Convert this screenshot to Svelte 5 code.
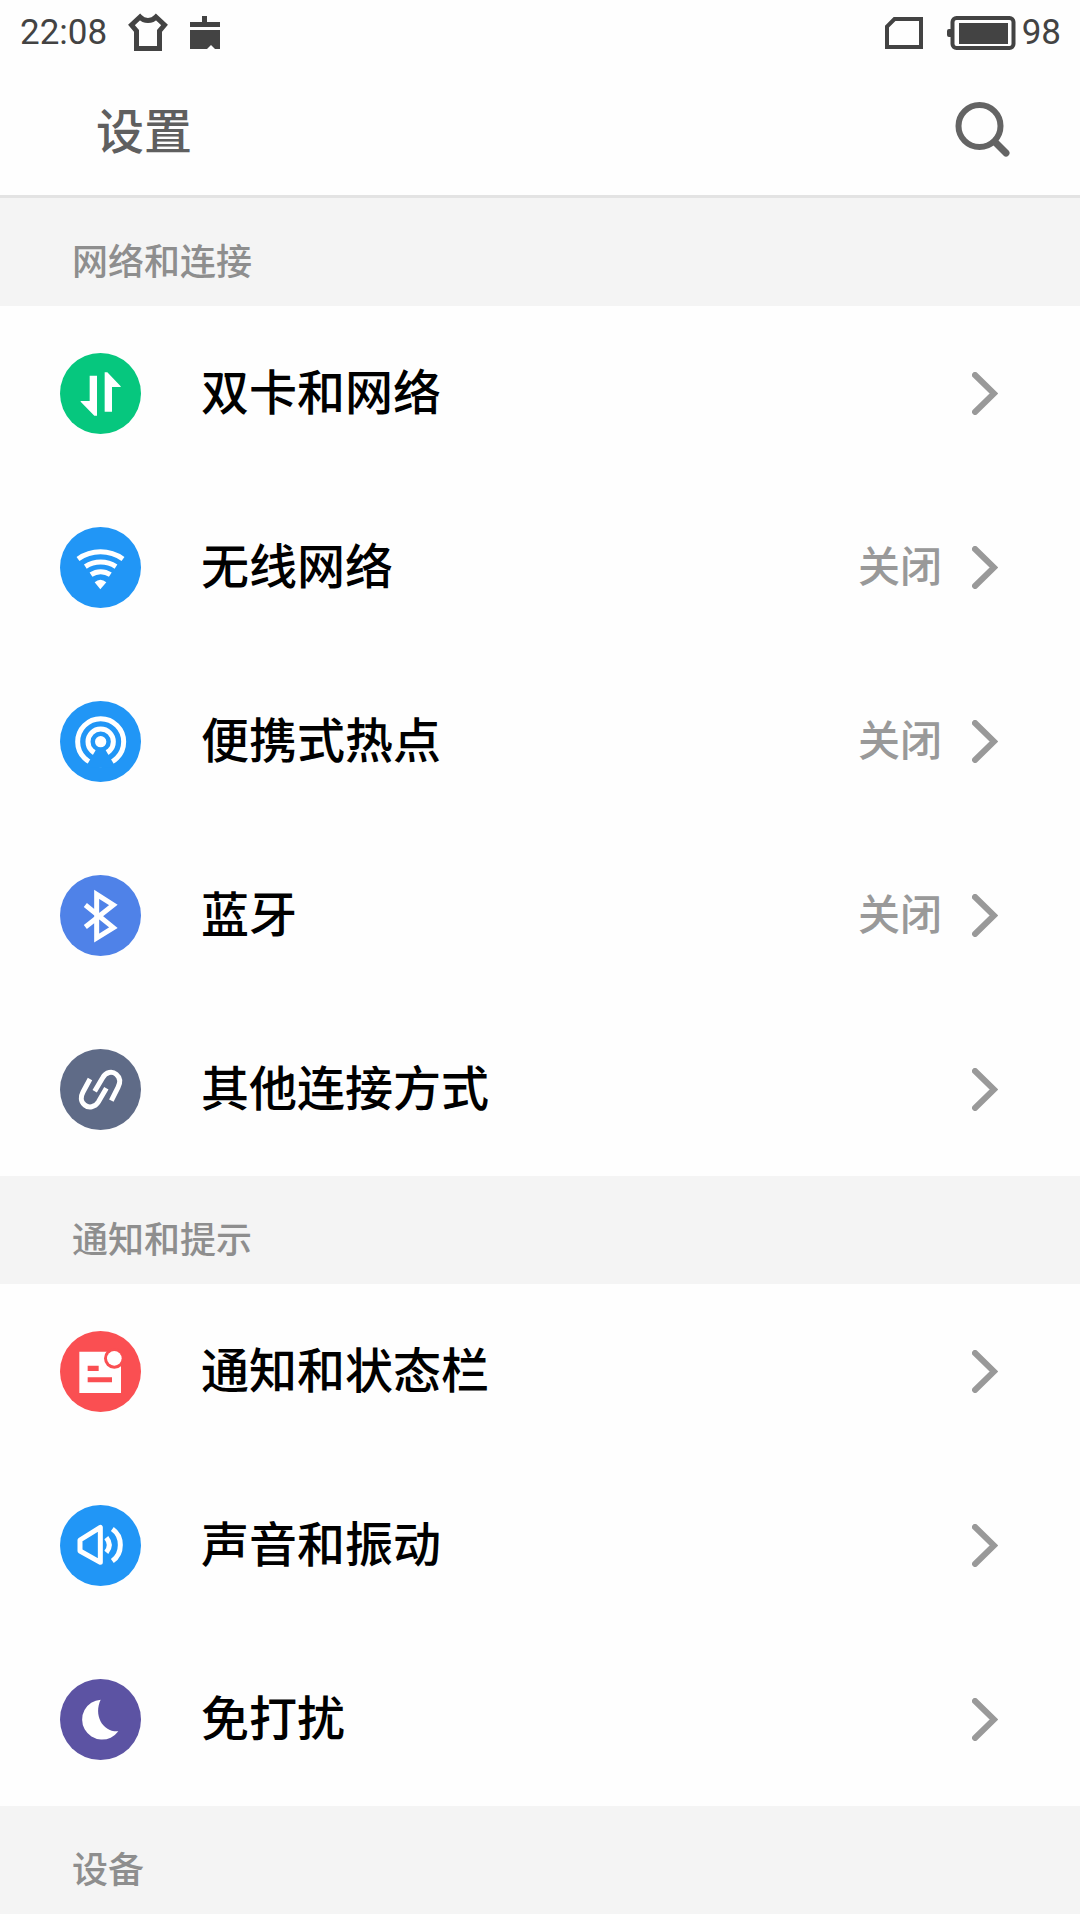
<script>
	const sections = [
		{
			title: "网络和连接",
			items: [
				{ icon: "data", color: "#06c77e", label: "双卡和网络" },
				{ icon: "wifi", color: "#2196f6", label: "无线网络", value: "关闭" },
				{ icon: "hotspot", color: "#2196f6", label: "便携式热点", value: "关闭" },
				{ icon: "bluetooth", color: "#4f82e8", label: "蓝牙", value: "关闭" },
				{ icon: "link", color: "#5f6b87", label: "其他连接方式" }
			]
		},
		{
			title: "通知和提示",
			items: [
				{ icon: "notice", color: "#fa4f52", label: "通知和状态栏" },
				{ icon: "sound", color: "#2196f6", label: "声音和振动" },
				{ icon: "moon", color: "#5c53a3", label: "免打扰" }
			]
		},
		{ title: "设备", items: [] }
	];
</script>

<div class="status-bar">
	<div class="status-group">
		<span>22:08</span>
		<svg class="shirt" width="40" height="40" viewBox="0 0 40 40">
			<path
				d="M12 4C16 8.500 24 8.500 28 4L36.500 12L31.500 18V35.500H8.500V18L3.500 12Z"
			/>
		</svg>
		<svg width="32" height="36" viewBox="0 0 32 36" fill="#434343">
			<path d="M13 1h5v6h13v5H1V7h12z" />
			<path d="M1 15h30v19h-5l-4-4l-4 4H1z" />
		</svg>
	</div>
	<div class="status-group right">
		<svg class="sim" width="40" height="34" viewBox="0 0 40 34">
			<path d="M3 31V10.500L10.500 3H37V31Z" />
		</svg>
		<svg class="battery" width="70" height="34" viewBox="0 0 70 34">
			<rect x="6.500" y="2" width="61" height="30" rx="4" />
			<path d="M5 13H3a2 2 0 0 0-2 2v4a2 2 0 0 0 2 2h2zM13 7h49v21H13z" />
		</svg>
		<span>98</span>
	</div>
</div>

<header>
	<h1>设置</h1>
	<button class="search" aria-label="搜索">
		<svg width="56" height="56" viewBox="0 0 56 56">
			<circle cx="24.500" cy="25" r="21" />
			<path d="M40 41L51 52" />
		</svg>
	</button>
</header>

<main>
	{#each sections as section}
		<section>
			<h2>{section.title}</h2>
			{#each section.items as item}
				<a class="row" href="#{item.icon}">
					<svg class="icon" viewBox="0 0 243 243">
						<circle cx="121.500" cy="121.500" r="121.500" fill={item.color} />
						{#if item.icon === "data"}
							<path class="fill" d="M89 68h22v120h-8L62 146v-2h27z" />
							<path class="fill" d="M134 176V58h8l40 42v2h-26v74z" />
						{:else if item.icon === "wifi"}
							<path class="line" d="M54 96A116 116 0 0 1 189 96" />
							<path class="line" d="M76 119A84 84 0 0 1 168 119" />
							<path class="line" d="M93 143A52 52 0 0 1 151 143" />
							<path class="fill" d="M104 166Q121 150 139 166L121 187z" />
						{:else if item.icon === "hotspot"}
							<circle class="line" cx="122" cy="122" r="69" />
							<circle class="line" cx="122" cy="122" r="38" />
							<path d="M122 122L76 200H168z" fill={item.color} />
							<circle class="fill" cx="122" cy="122" r="17" />
						{:else if item.icon === "bluetooth"}
							<path class="line" d="M76 90L160 158L110 189V58L160 90L76 156" />
						{:else if item.icon === "link"}
							<path
								class="line"
								d="M104 127L128 86C138 68 157 66 169 76C182 87 180 103 174 115L154 155"
							/>
							<path
								class="line"
								d="M139 118L115 159C105 175 86 178 74 168C61 158 62 142 69 129L90 90"
							/>
						{:else if item.icon === "notice"}
							<path class="fill" d="M58 62h125v124H58z" />
							<circle cx="163" cy="82" r="31" fill={item.color} />
							<circle class="fill" cx="163" cy="82" r="22" />
							<path d="M83 104h33v16H83zM83 139h73v15H83z" fill={item.color} />
						{:else if item.icon === "sound"}
							<path class="line round" d="M60 105L121 67V172L60 138Z" />
							<path class="line" d="M139 98Q157 120 139 142" />
							<path class="line" d="M157 72C189 94 189 146 157 168" />
						{:else if item.icon === "moon"}
							<path
								class="fill"
								d="M122 62A60 60 0 1 0 175 157C128 160 100 108 122 62z"
							/>
						{/if}
					</svg>
					<span class="label">{item.label}</span>
					{#if item.value}
						<span class="value">{item.value}</span>
					{/if}
					<svg class="chevron" width="26" height="43" viewBox="0 0 26 43">
						<path d="M3 3L22 21.500L3 40" />
					</svg>
				</a>
			{/each}
		</section>
	{/each}
</main>

<style>
	:global(body) {
		background: #fefefe;
		font-family: Roboto, "Noto Sans CJK SC", sans-serif;
	}

	svg {
		display: block;
		flex: none;
	}

	.status-bar {
		display: flex;
		align-items: center;
		justify-content: space-between;
		height: 66px;
		padding: 0 19px 0 20px;
		color: #434343;
		font-size: 35px;
		line-height: 42px;
	}

	.status-group {
		display: flex;
		align-items: center;
		gap: 21px;
	}

	.status-group.right {
		gap: 6px;
	}

	.shirt,
	.sim {
		fill: none;
		stroke: #434343;
		stroke-width: 5;
	}

	.sim {
		margin-right: 16px;
		stroke-width: 4;
	}

	.battery {
		fill: #434343;
	}

	.battery rect {
		fill: none;
		stroke: #434343;
		stroke-width: 4;
	}

	header {
		display: flex;
		align-items: center;
		justify-content: space-between;
		height: 129px;
		padding: 0 69px 0 96px;
		border-bottom: 3px solid #e3e3e3;
	}

	h1 {
		margin: 0;
		padding-top: 4px;
		color: #5f5f5f;
		font-size: 48px;
		font-weight: 500;
		line-height: 72px;
	}

	.search {
		padding: 0 0 4px;
		border: none;
		background: none;
		cursor: pointer;
	}

	.search svg {
		fill: none;
		stroke: #646464;
		stroke-width: 6;
		stroke-linecap: round;
	}

	.search path {
		stroke-width: 7;
	}

	h2 {
		margin: 0;
		padding: 38px 72px 16px;
		background: #f4f4f4;
		color: #8e8e8e;
		font-size: 36px;
		font-weight: 500;
		line-height: 54px;
	}

	.row {
		display: flex;
		align-items: center;
		height: 174px;
		padding: 0 82px 0 60px;
		color: #000;
		text-decoration: none;
	}

	.icon {
		width: 81px;
		height: 81px;
		margin-right: 60px;
	}

	.fill {
		fill: #fff;
	}

	.line {
		fill: none;
		stroke: #fff;
		stroke-width: 15;
	}

	.round {
		stroke-linejoin: round;
	}

	.label,
	.value {
		padding-top: 2px;
		font-weight: 500;
		line-height: 72px;
	}

	.label {
		flex: 1;
		font-size: 48px;
	}

	.value {
		margin-right: 30px;
		color: #999;
		font-size: 42px;
	}

	.chevron {
		fill: none;
		stroke: #999;
		stroke-width: 6;
		stroke-linecap: round;
	}
</style>
